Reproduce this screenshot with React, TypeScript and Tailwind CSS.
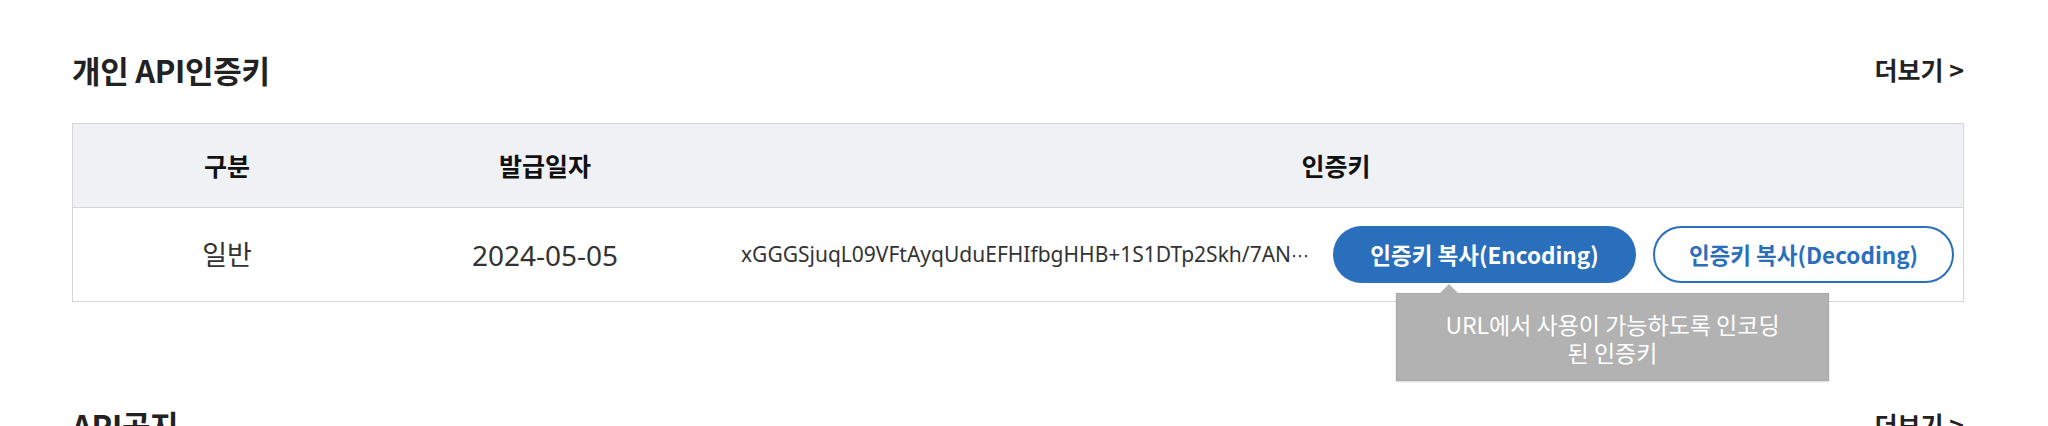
import React from "react";

const CJK = { fontFamily: '"Noto Sans CJK KR", "Noto Sans", sans-serif' };
const LATIN = { fontFamily: '"Noto Sans", "Noto Sans CJK KR", sans-serif' };
const DOTS = { fontFamily: '"DejaVu Sans", "Noto Sans CJK KR", sans-serif' };

function SectionHeader({ title }: { title: string }) {
  return (
    <div className="flex h-[38px] items-center justify-between">
      <h2 className="text-[31px] font-bold leading-none tracking-[-0.3px] text-[#222]" style={CJK}>
        {title}
      </h2>
      <a className="text-[25px] font-bold leading-none text-[#222]" style={CJK}>
        더보기 &gt;
      </a>
    </div>
  );
}

export default function App() {
  return (
    <div className="min-h-[426px] w-full overflow-hidden bg-white pl-[72px] pr-[84px] pt-[50px]">
      <section>
        <SectionHeader title="개인 API인증키" />
        <div className="mt-[35px] border border-[#d6d6d6]">
          <div
            className="grid h-[84px] grid-cols-[308px_328px_1fr] items-center border-b border-[#d6d6d6] bg-[#f0f1f5] text-[25px] font-bold text-[#111]"
            style={CJK}
          >
            <div className="text-center">구분</div>
            <div className="text-center">발급일자</div>
            <div className="text-center">인증키</div>
          </div>
          <div className="grid h-[93px] grid-cols-[308px_328px_1fr] items-center text-[#333]">
            <div className="text-center text-[27px]" style={CJK}>
              일반
            </div>
            <div className="text-center text-[28px]" style={LATIN}>
              2024-05-05
            </div>
            <div className="flex items-center pl-[32px] pr-[9px]">
              <div className="min-w-0 flex-1 whitespace-nowrap text-[21px] text-[#333]" style={LATIN}>
                xGGGSjuqL09VFtAyqUduEFHIfbgHHB+1S1DTp2Skh/7AN
                <span className="text-[18px]" style={DOTS}>⋯</span>
              </div>
              <div className="flex items-center gap-[17px]">
                <div className="relative">
                  <button
                    className="flex h-[57px] w-[303px] items-center justify-center rounded-full bg-[#2a6fbb] text-[22.5px] font-bold text-white"
                    style={CJK}
                  >
                    인증키 복사(Encoding)
                  </button>
                  <div className="absolute left-[63px] top-[67px] z-10 flex h-[88px] w-[433px] items-center justify-center border border-[#a9a9a9] bg-[#b2b2b2] text-center text-[23px] leading-[28px] text-white shadow-[0_1px_2px_rgba(0,0,0,0.15)]" style={CJK}>
                    <div className="absolute left-[42px] top-[-10px] h-0 w-0 border-x-[10px] border-b-[10px] border-x-transparent border-b-[#b2b2b2]" />
                    <p className="pt-[2px]">
                      URL에서 사용이 가능하도록 인코딩
                      <br />된 인증키
                    </p>
                  </div>
                </div>
                <button
                  className="flex h-[57px] w-[301px] items-center justify-center rounded-full border-2 border-[#2a6fbb] bg-white text-[22.5px] font-bold text-[#2a6fbb]"
                  style={CJK}
                >
                  인증키 복사(Decoding)
                </button>
              </div>
            </div>
          </div>
        </div>
      </section>
      <section className="mt-[103px]">
        <SectionHeader title="API공지" />
      </section>
    </div>
  );
}
